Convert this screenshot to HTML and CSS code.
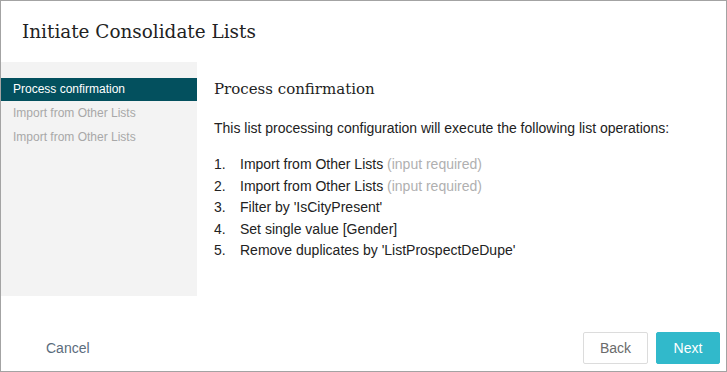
FILE: index.html
```html
<!DOCTYPE html>
<html>
<head>
<meta charset="utf-8">
<link rel="stylesheet" href="styles.css">
</head>
<body>
<div class="dialog">
  <h1 class="title">Initiate Consolidate Lists</h1>
  <div class="main">
    <nav class="side">
      <div class="step active">Process confirmation</div>
      <div class="step">Import from Other Lists</div>
      <div class="step">Import from Other Lists</div>
    </nav>
    <section class="content">
      <h2 class="heading">Process confirmation</h2>
      <p class="intro">This list processing configuration will execute the following list operations:</p>
      <ol class="ops">
        <li><span class="num">1.</span>Import from Other Lists <span class="muted">(input required)</span></li>
        <li><span class="num">2.</span>Import from Other Lists <span class="muted">(input required)</span></li>
        <li><span class="num">3.</span>Filter by 'IsCityPresent'</li>
        <li><span class="num">4.</span>Set single value [Gender]</li>
        <li><span class="num">5.</span>Remove duplicates by 'ListProspectDeDupe'</li>
      </ol>
    </section>
  </div>
  <div class="footer">
    <button class="link">Cancel</button>
    <div class="actions">
      <button class="btn back">Back</button>
      <button class="btn next">Next</button>
    </div>
  </div>
</div>
</body>
</html>
```

FILE: styles.css
```css
html, body {
  margin: 0;
  padding: 0;
  background: #ffffff;
}
.dialog {
  width: 727px;
  height: 372px;
  box-sizing: border-box;
  border: 1px solid #a3a3a3;
  display: flex;
  flex-direction: column;
  font-family: "Liberation Sans", Arial, sans-serif;
}
.title {
  margin: 0;
  padding: 20px 0 0 21px;
  height: 41px;
  font-family: "DejaVu Serif", serif;
  font-weight: normal;
  font-size: 18.4px;
  color: #222;
  line-height: 22px;
}
.main {
  display: flex;
  height: 234px;
}
.side {
  width: 196px;
  background: #f3f3f3;
  padding-top: 16px;
  box-sizing: border-box;
}
.step {
  height: 24px;
  line-height: 24px;
  padding-left: 12px;
  font-size: 12px;
  color: #a8a8a8;
}
.step.active {
  height: 23px;
  line-height: 23px;
  background: #03505e;
  color: #ffffff;
}
.content {
  padding: 17px 0 0 17px;
  flex: 1;
}
.heading {
  margin: 0;
  font-family: "DejaVu Serif", serif;
  font-weight: normal;
  font-size: 15px;
  line-height: 20px;
  color: #222;
}
.intro {
  margin: 20px 0 0 0;
  font-size: 14px;
  line-height: 18px;
  color: #222;
}
.ops {
  list-style: none;
  margin: 17px 0 0 0;
  padding: 0;
  font-size: 14px;
  color: #222;
}
.ops li {
  line-height: 21.5px;
}
.num {
  display: inline-block;
  width: 26px;
}
.muted {
  color: #b0b0b0;
}
.footer {
  flex: 1;
  display: flex;
  align-items: flex-end;
  justify-content: space-between;
  padding: 0 6px 7px 45px;
}
.link {
  border: none;
  background: none;
  padding: 0;
  margin-bottom: 8px;
  font-family: "Liberation Sans", Arial, sans-serif;
  font-size: 14px;
  color: #5b6c7c;
}
.actions {
  display: flex;
  gap: 8px;
}
.btn {
  height: 32px;
  font-family: "Liberation Sans", Arial, sans-serif;
  font-size: 14px;
  border-radius: 2px;
}
.back {
  width: 65px;
  background: #ffffff;
  border: 1px solid #dcdcdc;
  color: #6b6b6b;
}
.next {
  width: 64px;
  background: #31b9cb;
  border: 1px solid #31b9cb;
  color: #ffffff;
}
```
